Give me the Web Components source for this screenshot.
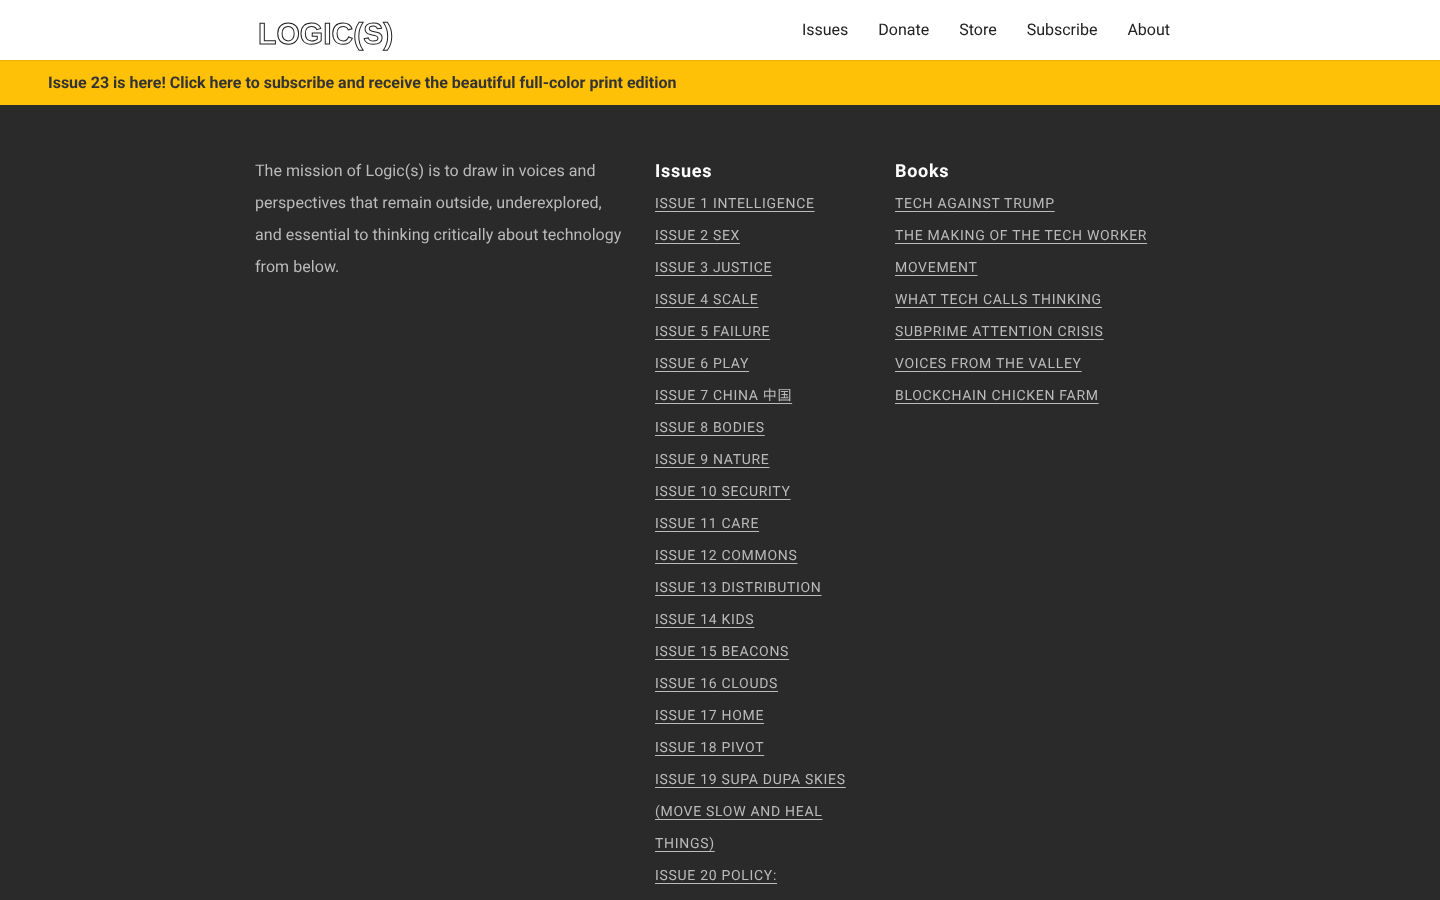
<!DOCTYPE html>
<html lang="en"><head><meta charset="utf-8"><title>Logic(s)</title>
<style>
html,body{margin:0;padding:0;background:#2a2a2a;height:900px;overflow:hidden}
body{font-family:Roboto,"Noto Sans CJK SC",sans-serif}
</style></head><body>
<site-header>
  <a slot="nav" href="#">Issues</a><a slot="nav" href="#">Donate</a><a slot="nav" href="#">Store</a><a slot="nav" href="#">Subscribe</a><a slot="nav" href="#">About</a>
</site-header>
<promo-banner>Issue 23 is here! Click here to subscribe and receive the beautiful full-color print edition</promo-banner>
<site-footer>
  <span slot="mission">The mission of Logic(s) is to draw in voices and perspectives that remain outside, underexplored, and essential to thinking critically about technology from below.</span>
  <link-column slot="issues" heading="Issues" items="ISSUE 1 INTELLIGENCE|ISSUE 2 SEX|ISSUE 3 JUSTICE|ISSUE 4 SCALE|ISSUE 5 FAILURE|ISSUE 6 PLAY|ISSUE 7 CHINA 中国|ISSUE 8 BODIES|ISSUE 9 NATURE|ISSUE 10 SECURITY|ISSUE 11 CARE|ISSUE 12 COMMONS|ISSUE 13 DISTRIBUTION|ISSUE 14 KIDS|ISSUE 15 BEACONS|ISSUE 16 CLOUDS|ISSUE 17 HOME|ISSUE 18 PIVOT|ISSUE 19 SUPA DUPA SKIES (MOVE SLOW AND HEAL THINGS)|ISSUE 20 POLICY:"></link-column>
  <link-column slot="books" heading="Books" items="TECH AGAINST TRUMP|THE MAKING OF THE TECH WORKER MOVEMENT|WHAT TECH CALLS THINKING|SUBPRIME ATTENTION CRISIS|VOICES FROM THE VALLEY|BLOCKCHAIN CHICKEN FARM"></link-column>
</site-footer>
<script>
function def(name, html, init){
  customElements.define(name, class extends HTMLElement{
    constructor(){super();this.attachShadow({mode:'open'}).innerHTML=html;}
    connectedCallback(){ if(init) init(this); }
  });
}
def('site-header',`<style>
:host{display:block;height:60px;background:#fff;box-sizing:border-box;box-shadow:0 1px 0 rgba(0,0,0,.08);position:relative;z-index:1}
.in{box-sizing:border-box;width:930px;margin-left:255px;height:60px;display:flex;justify-content:space-between;padding-right:15px;will-change:transform;text-rendering:geometricPrecision}
.logo{font:700 30px/1 "Liberation Sans",Arial,sans-serif;color:#fff;-webkit-text-stroke:1px #222;padding:20px 0 0 3px;letter-spacing:.05px}
nav{display:flex;gap:30px;align-items:center}
::slotted(a){font:400 16px/24px Roboto,sans-serif;color:#212121;text-decoration:none}
</style><div class="in"><div class="logo">LOGIC(S)</div><nav><slot name="nav"></slot></nav></div>`);
def('promo-banner',`<style>
:host{display:block;height:45px;background:#ffc107;color:#333;font:700 16px/45px Roboto,sans-serif;text-rendering:geometricPrecision}
div{padding-left:48px;will-change:transform}
</style><div><slot></slot></div>`);
def('site-footer',`<style>
:host{display:block;background:#2a2a2a}
.g{box-sizing:border-box;width:930px;margin-left:255px;padding-top:50px;display:grid;grid-template-columns:400px 240px 290px;will-change:transform;text-rendering:geometricPrecision}
.m{color:#bbb;font:400 16px/32px Roboto,sans-serif;padding-right:30px;letter-spacing:.05px}
.c{padding:1px 30px 0 0}
</style><div class="g"><div class="m"><slot name="mission"></slot></div><div class="c"><slot name="issues"></slot></div><div class="c"><slot name="books"></slot></div></div>`);
def('link-column',`<style>
:host{display:block}
h3{margin:0;color:#fff;font:700 18px/32px Roboto,sans-serif;letter-spacing:.72px}
ul{list-style:none;margin:0;padding:0}
li{font:400 14px/32px Roboto,"Noto Sans CJK SC",sans-serif;letter-spacing:.7px}
a{color:#bbb;text-decoration:underline;text-underline-offset:3px;text-decoration-thickness:1px}
</style><h3></h3><ul></ul>`, el=>{
  const s=el.shadowRoot;
  s.querySelector('h3').textContent=el.getAttribute('heading');
  const ul=s.querySelector('ul');ul.textContent='';
  for(const t of el.getAttribute('items').split('|')){
    const li=document.createElement('li');const a=document.createElement('a');
    a.href='#';a.textContent=t;li.append(a);ul.append(li);
  }
});
</script>
</body></html>
